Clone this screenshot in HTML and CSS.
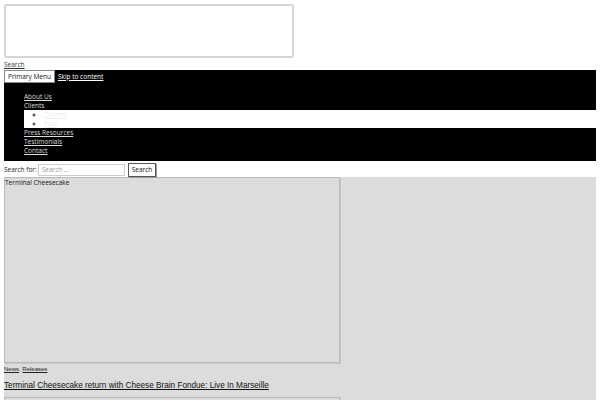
FILE: index.html
```html
<!DOCTYPE html>
<html>
<head>
<meta charset="utf-8">
<link rel="stylesheet" href="styles.css">
</head>
<body>
<div class="banner"></div>
<a class="top-search" href="#">Search</a>
<nav class="nav">
  <div class="nav-top">
    <button class="menu-btn">Primary Menu</button>
    <a class="skip" href="#">Skip to content</a>
  </div>
  <ul class="menu">
    <li><a href="#">About Us</a></li>
    <li>Clients
      <ul class="sub">
        <li><a href="#">Current</a></li>
        <li><a href="#">Past</a></li>
      </ul>
    </li>
    <li><a href="#">Press Resources</a></li>
    <li><a href="#">Testimonials</a></li>
    <li><a href="#">Contact</a></li>
  </ul>
</nav>
<form class="search-form">
  <label class="search-label">Search for:</label>
  <input class="search-input" type="text" placeholder="Search …">
  <button class="search-btn" type="button">Search</button>
</form>
<main class="content">
  <div class="post-image">Terminal Cheesecake</div>
  <div class="cats"><a href="#">News</a>, <a href="#">Releases</a></div>
  <h2 class="post-title"><a href="#">Terminal Cheesecake return with Cheese Brain Fondue: Live In Marseille</a></h2>
  <div class="post-image second"></div>
</main>
</body>
</html>
```
FILE: styles.css
```css
html {
  margin: 0;
  padding: 0;
  overflow: hidden;
}
body {
  margin: 4px;
  font-family: "Open Sans", sans-serif;
  font-size: 6.5px;
  line-height: 9px;
  color: #222;
  background: #fff;
}
.banner {
  width: 286px;
  height: 50px;
  border: 2px solid #d6d6d6;
  border-radius: 2px;
}
.top-search {
  display: block;
  color: #333;
  margin-top: 2px;
  height: 10px;
  line-height: 10px;
}
.nav {
  background: #000;
  color: #ddd;
  padding-bottom: 6px;
}
.nav-top {
  display: flex;
  align-items: center;
  gap: 3px;
  height: 13px;
}
.menu-btn {
  font-family: "Open Sans", sans-serif;
  font-size: 6.5px;
  background: #fff;
  color: #111;
  border: 1px solid #888;
  height: 13px;
  padding: 0 3px;
  margin: 0;
  line-height: 11px;
}
.skip {
  color: #fff;
}
.menu {
  list-style: none;
  margin: 9px 0 0 0;
  padding: 0 0 0 20px;
}
.menu a {
  color: #ddd;
}
.sub {
  background: #fff;
  list-style: circle;
  margin: 0;
  padding: 0 0 0 20px;
  color: #222;
}
.sub a {
  color: #eee;
}
.search-form {
  display: flex;
  align-items: center;
  height: 15px;
  margin-top: 1px;
  color: #222;
}
.search-label {
  margin-right: 1px;
}
.search-input {
  font-family: "Open Sans", sans-serif;
  font-size: 6.5px;
  width: 79px;
  height: 8px;
  padding: 1px 3px;
  border: 1px solid #ccc;
  margin: 0;
}
.search-input::placeholder {
  color: #999;
}
.search-btn {
  font-family: "Open Sans", sans-serif;
  font-size: 6.5px;
  margin-left: 3px;
  height: 14px;
  padding: 0 3px;
  background: #fff;
  color: #111;
  border: 1px solid #555;
  box-shadow: 1px 1px 0 #999;
  line-height: 11px;
}
.content {
  background: #dcdcdc;
  height: 240px;
}
.post-image {
  width: 334px;
  height: 184px;
  border: 1px solid #b8b8b8;
  box-shadow: 1px 1px 0 #c8c8c8;
  color: #111;
  line-height: 9px;
}
.post-image.second {
  height: 50px;
}
.cats {
  font-family: "Liberation Sans", Arial, sans-serif;
  font-size: 6px;
  margin-top: 2px;
  line-height: 9px;
}
.cats a {
  color: #222;
}
.post-title {
  font-family: "Liberation Sans", Arial, sans-serif;
  font-size: 8.2px;
  font-weight: normal;
  margin: 6px 0 5px 0;
  line-height: 12px;
}
.post-title a {
  color: #111;
}
```
